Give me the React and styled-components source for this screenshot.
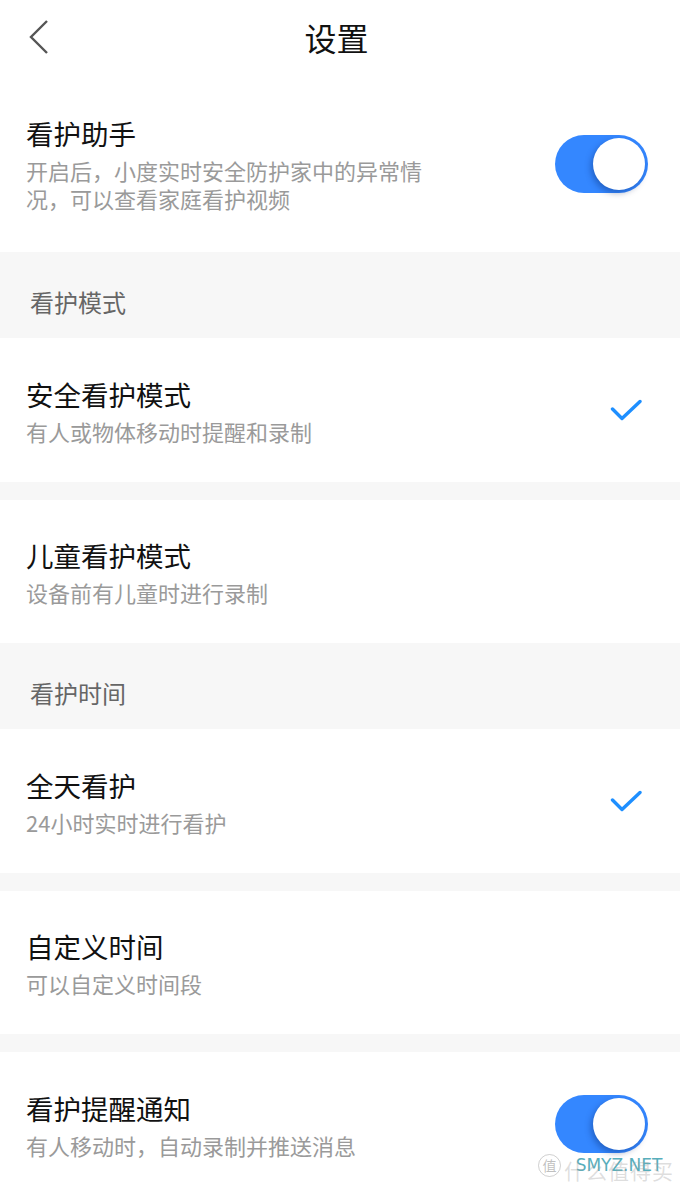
import React from "react";
import styled, { createGlobalStyle } from "styled-components";

const GlobalStyle = createGlobalStyle`
  html, body {
    margin: 0;
    padding: 0;
    background: #ffffff;
  }
  body {
    font-family: "Noto Sans CJK SC", "Noto Sans", sans-serif;
    -webkit-font-smoothing: antialiased;
  }
  * { box-sizing: border-box; }
`;

const Page = styled.div`
  width: 680px;
  background: #ffffff;
  position: relative;
  overflow: hidden;
`;

const Header = styled.header`
  height: 78px;
  display: grid;
  grid-template-columns: 1fr auto 1fr;
  align-items: center;
  padding: 0 7px 4px 0;
  background: #ffffff;
`;

const BackButton = styled.button`
  justify-self: start;
  display: flex;
  align-items: center;
  border: none;
  background: none;
  padding: 0 0 0 29px;
  margin: 0;
  cursor: pointer;
`;

const Title = styled.h1`
  margin: 0;
  font-size: 32px;
  line-height: 44px;
  font-weight: 400;
  color: #111111;
`;

const Row = styled.div`
  position: relative;
  display: flex;
  align-items: center;
  justify-content: space-between;
  background: #ffffff;
  padding: ${(p) => (p.$multi ? "37px 32px 40px 26px" : "37.5px 32px 37px 26px")};
`;

const TextBlock = styled.div`
  display: flex;
  flex-direction: column;
  gap: 5px;
`;

const ItemTitle = styled.div`
  font-size: 27.5px;
  line-height: 36px;
  color: #111111;
`;

const ItemDesc = styled.div`
  font-size: 22px;
  line-height: 28px;
  color: #9a9a9a;
  max-width: 425px;
`;

const SectionHeader = styled.div`
  background: #f7f7f7;
  padding: 35px 30px 21px 30px;
  font-size: 24px;
  line-height: 30px;
  color: #666666;
`;

const Gap = styled.div`
  height: 18px;
  background: #f7f7f7;
`;

const Toggle = styled.div`
  width: 93px;
  height: 58px;
  border-radius: 29px;
  background: #3487ff;
  display: flex;
  align-items: center;
  justify-content: ${(p) => (p.$on ? "flex-end" : "flex-start")};
  padding: 3px;
  flex-shrink: 0;
`;

const Knob = styled.div`
  width: 52px;
  height: 52px;
  border-radius: 50%;
  background: #ffffff;
  box-shadow: -2px 3px 6px rgba(0, 30, 90, 0.35);
`;

const CheckWrap = styled.div`
  display: flex;
  margin-right: 6px;
  flex-shrink: 0;
`;

const Watermark = styled.div`
  position: absolute;
  right: 6px;
  top: 101px;
  display: flex;
  align-items: center;
  gap: 3px;
  pointer-events: none;
`;

const WmCircle = styled.span`
  width: 23px;
  height: 23px;
  border-radius: 50%;
  border: 1.5px solid rgba(150, 150, 150, 0.45);
  display: flex;
  align-items: center;
  justify-content: center;
  font-size: 14px;
  line-height: 1;
  color: rgba(150, 150, 150, 0.6);
`;

const WmTextStack = styled.span`
  display: grid;
  place-items: center;
`;

const WmFaint = styled.span`
  grid-area: 1 / 1;
  font-size: 21px;
  line-height: 24px;
  letter-spacing: 1px;
  color: rgba(160, 160, 160, 0.35);
  transform: translateY(5px);
`;

const WmBrand = styled.span`
  grid-area: 1 / 1;
  font-family: "DejaVu Sans", "Liberation Sans", sans-serif;
  font-size: 17px;
  line-height: 20px;
  color: #58aebb;
  text-shadow: 0 0 2px #ffffff, 0 0 2px #ffffff;
`;

const Chevron = () => (
  <svg width="20" height="36" viewBox="0 0 20 36" fill="none">
    <polyline points="18,2 2,18 18,34" stroke="#555555" strokeWidth="2.4" />
  </svg>
);

const Check = () => (
  <svg width="32" height="22" viewBox="0 0 32 22" fill="none">
    <polyline
      points="2.5,10 12,19.5 30,2.5"
      stroke="#1e8fff"
      strokeWidth="3.4"
      strokeLinecap="round"
      strokeLinejoin="round"
    />
  </svg>
);

const Item = ({ title, desc, right, multi, children }) => (
  <Row $multi={multi}>
    <TextBlock>
      <ItemTitle>{title}</ItemTitle>
      <ItemDesc>{desc}</ItemDesc>
    </TextBlock>
    {right}
    {children}
  </Row>
);

const Switch = ({ on = true }) => (
  <Toggle $on={on}>
    <Knob />
  </Toggle>
);

export default function App() {
  return (
    <>
      <GlobalStyle />
      <Page>
        <Header>
          <BackButton aria-label="返回">
            <Chevron />
          </BackButton>
          <Title>设置</Title>
          <span />
        </Header>

        <Item
          multi
          title="看护助手"
          desc="开启后，小度实时安全防护家中的异常情况，可以查看家庭看护视频"
          right={<Switch on />}
        />

        <SectionHeader>看护模式</SectionHeader>
        <Item
          title="安全看护模式"
          desc="有人或物体移动时提醒和录制"
          right={
            <CheckWrap>
              <Check />
            </CheckWrap>
          }
        />
        <Gap />
        <Item title="儿童看护模式" desc="设备前有儿童时进行录制" />

        <SectionHeader>看护时间</SectionHeader>
        <Item
          title="全天看护"
          desc="24小时实时进行看护"
          right={
            <CheckWrap>
              <Check />
            </CheckWrap>
          }
        />
        <Gap />
        <Item title="自定义时间" desc="可以自定义时间段" />
        <Gap />
        <Item title="看护提醒通知" desc="有人移动时，自动录制并推送消息" right={<Switch on />}>
          <Watermark>
            <WmCircle>值</WmCircle>
            <WmTextStack>
              <WmFaint>什么值得买</WmFaint>
              <WmBrand>SMYZ.NET</WmBrand>
            </WmTextStack>
          </Watermark>
        </Item>
      </Page>
    </>
  );
}
